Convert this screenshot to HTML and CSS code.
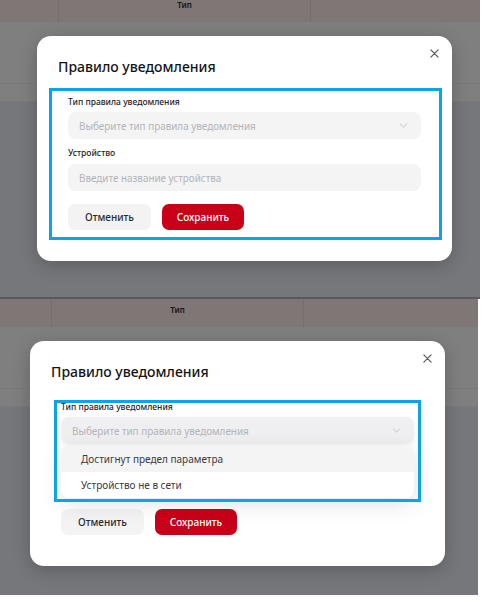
FILE: index.html
```html
<!DOCTYPE html>
<html lang="ru">
<head>
<meta charset="utf-8">
<title>Правило уведомления</title>
<link rel="stylesheet" href="styles.css">
</head>
<body>
<div class="shots">

  <!-- Closed state -->
  <section class="shot shot-closed">
    <div class="scene">
      <div class="table">
        <div class="thead">
          <div class="th th-first"></div>
          <div class="th">Тип</div>
          <div class="th"></div>
        </div>
        <div class="row row-tall"></div>
        <div class="row row-short"></div>
      </div>
      <div class="backdrop"></div>

      <div class="modal">
        <h2 class="modal-title">Правило уведомления</h2>
        <button class="modal-close" aria-label="Закрыть">
          <svg viewBox="0 0 10 10" width="9" height="9"><path d="M1 1L9 9M9 1L1 9" stroke="#5b5b60" stroke-width="1.4" stroke-linecap="round" fill="none"/></svg>
        </button>
        <form class="form">
          <label class="field-label">Тип правила уведомления</label>
          <div class="select">
            <span class="placeholder">Выберите тип правила уведомления</span>
            <svg class="chevron" viewBox="0 0 10 6" width="9" height="5"><path d="M1 1l4 4 4-4" stroke="#c4c4ca" stroke-width="1.2" fill="none" stroke-linecap="round" stroke-linejoin="round"/></svg>
          </div>
          <div class="field-below">
            <label class="field-label field-label-next">Устройство</label>
            <div class="input"><span class="placeholder">Введите название устройства</span></div>
          </div>
          <div class="actions">
            <button type="button" class="btn btn-cancel">Отменить</button>
            <button type="button" class="btn btn-save">Сохранить</button>
          </div>
        </form>
        <div class="mark mark-closed"></div>
      </div>
    </div>
  </section>

  <!-- Open dropdown state -->
  <section class="shot shot-open">
    <div class="scene">
      <div class="table">
        <div class="thead">
          <div class="th th-first"></div>
          <div class="th">Тип</div>
          <div class="th"></div>
        </div>
        <div class="row row-tall"></div>
        <div class="row row-short"></div>
      </div>
      <div class="backdrop"></div>

      <div class="modal">
        <h2 class="modal-title">Правило уведомления</h2>
        <button class="modal-close" aria-label="Закрыть">
          <svg viewBox="0 0 10 10" width="9" height="9"><path d="M1 1L9 9M9 1L1 9" stroke="#5b5b60" stroke-width="1.4" stroke-linecap="round" fill="none"/></svg>
        </button>
        <form class="form">
          <label class="field-label">Тип правила уведомления</label>
          <div class="select select-open">
            <span class="placeholder">Выберите тип правила уведомления</span>
            <svg class="chevron" viewBox="0 0 10 6" width="9" height="5"><path d="M1 1l4 4 4-4" stroke="#c4c4ca" stroke-width="1.2" fill="none" stroke-linecap="round" stroke-linejoin="round"/></svg>
            <ul class="options">
              <li class="option option-active">Достигнут предел параметра</li>
              <li class="option">Устройство не в сети</li>
            </ul>
          </div>
          <!-- covered by the open list -->
          <div class="field-below is-covered">
            <label class="field-label field-label-next">Устройство</label>
            <div class="input"><span class="placeholder">Введите название устройства</span></div>
          </div>
          <div class="actions">
            <button type="button" class="btn btn-cancel">Отменить</button>
            <button type="button" class="btn btn-save">Сохранить</button>
          </div>
        </form>
        <div class="mark mark-open"></div>
      </div>
    </div>
  </section>

</div>
</body>
</html>
```

FILE: styles.css
```css
* { box-sizing: border-box; }

html, body {
  margin: 0;
  padding: 0;
  background: #ffffff;
  font-family: "Noto Sans", "Open Sans", sans-serif;
}

.shots {
  display: flex;
  flex-direction: column;
  align-items: flex-start;
}

.shot {
  position: relative;
  overflow: hidden;
}

.shot-closed {
  width: 480px;
  height: 299px;
  border-bottom: 2px solid #5a5a5e;
}

.shot-open {
  width: 478px;
  height: 296px;
}

.scene {
  position: relative;
  width: 500px;
  height: 310px;
  background: #eceef6;
}

.shot-closed .scene { margin-top: -6px; }
.shot-open .scene { margin-left: -7px; }

/* table behind the dialog */
.table {
  display: flex;
  flex-direction: column;
}

.thead {
  display: grid;
  grid-template-columns: 59px 252px 1fr;
  height: 28px;
  background: #fdeeec;
}

.th {
  display: flex;
  align-items: flex-start;
  justify-content: center;
  padding-top: 6px;
  font-size: 8px;
  line-height: 10px;
  font-weight: 600;
  color: #2c2c30;
  border-right: 1px solid #ebdcdb;
}

.row {
  background: #ffffff;
  border-bottom: 1px solid #f2f2f2;
}

.row-tall { height: 62px; }
.row-short { height: 18px; }

.backdrop {
  position: absolute;
  inset: 0;
  background: rgba(0, 0, 0, 0.5);
}

/* dialog */
.modal {
  position: absolute;
  left: 37px;
  top: 42px;
  width: 415px;
  height: 225px;
  background: #ffffff;
  border-radius: 14px;
  box-shadow: 0 4px 18px rgba(0, 0, 0, 0.22);
  padding: 21px 0 0;
}

.modal-title {
  margin: 0;
  padding: 0 21px;
  font-size: 14px;
  line-height: 20px;
  font-weight: 500;
  color: #151517;
}

.modal-close {
  position: absolute;
  top: 13px;
  right: 13px;
  width: 9px;
  height: 9px;
  padding: 0;
  border: 0;
  background: none;
  display: flex;
}

.form {
  margin: 19px 0 0;
  padding: 0 31px;
  display: flex;
  flex-direction: column;
}

.field-below {
  display: flex;
  flex-direction: column;
}

.is-covered { visibility: hidden; }

.field-label {
  font-size: 8.5px;
  line-height: 12px;
  font-weight: 500;
  color: #222226;
  margin-bottom: 4px;
}

.field-label-next {
  margin-top: 8px;
  margin-bottom: 5px;
}

.select,
.input {
  position: relative;
  height: 27px;
  border-radius: 8px;
  background: #f4f4f5;
  display: flex;
  align-items: center;
  padding: 0 11px;
}

.select-open {
  background: #efeff1;
  box-shadow: 0 2px 10px rgba(0, 0, 0, 0.06);
}

.placeholder {
  font-size: 9.9px;
  color: #b3b3b9;
}

.chevron {
  margin-left: auto;
  margin-right: 2px;
}

.options {
  position: absolute;
  left: 0;
  right: 0;
  top: 29px;
  margin: 0;
  padding: 0;
  list-style: none;
  background: #ffffff;
  border-radius: 8px;
  overflow: hidden;
  box-shadow: 0 6px 22px rgba(0, 0, 0, 0.12);
  z-index: 2;
}

.option {
  height: 26px;
  display: flex;
  align-items: center;
  padding: 0 20px;
  font-size: 10px;
  color: #3a3a3f;
}

.option-active { background: #f4f4f5; }

.actions {
  display: flex;
  gap: 11px;
  margin-top: 13px;
}

.btn {
  height: 26px;
  border: 0;
  border-radius: 7px;
  font-family: inherit;
  font-size: 10px;
  font-weight: 500;
  padding: 0;
}

.btn-cancel {
  width: 83px;
  background: #f3f3f4;
  color: #2a2a2e;
}

.btn-save {
  width: 82px;
  background: #c80018;
  color: #ffffff;
}

/* highlight frame around the form area */
.mark {
  position: absolute;
  border: 3px solid #0aa4e8;
  pointer-events: none;
}

.mark-closed {
  left: 12px;
  top: 52px;
  width: 393px;
  height: 152px;
}

.mark-open {
  left: 24px;
  top: 59px;
  width: 367px;
  height: 102px;
  z-index: 3;
}
```
